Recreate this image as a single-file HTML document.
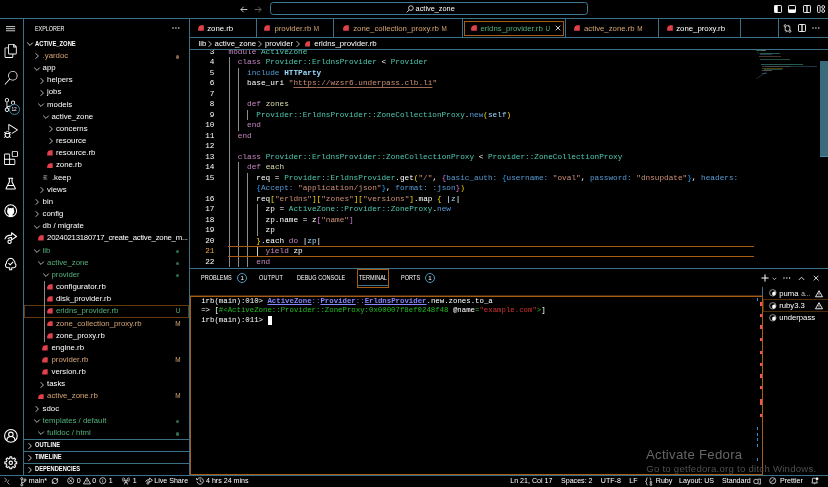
<!DOCTYPE html>
<html lang="en"><head><meta charset="utf-8"><title>erldns_provider.rb - active_zone</title>
<style>
*{box-sizing:border-box;margin:0;padding:0}
html,body{width:828px;height:487px;background:#000;overflow:hidden}
body{position:relative;font-family:"Liberation Sans",sans-serif;color:#fff;font-size:7.3px;line-height:1}
#app{position:absolute;left:0;top:0;width:828px;height:487px;will-change:transform}
.a{position:absolute}
.hl{position:absolute;height:1px;background:#3a7186}
.vl{position:absolute;width:1px;background:#3a7186}
.row{position:absolute;left:24px;width:165px;height:12.16px;line-height:12.16px;font-size:7.8px;white-space:nowrap}
.row span.t{position:absolute;top:0}
.row .st{position:absolute;left:149px;top:0;font-size:6.4px;width:10px;text-align:center}
.dot{position:absolute;left:151.9px;top:5.0px;width:3.6px;height:3.6px;border-radius:50%}
.mono{font-family:"Liberation Mono",monospace}
.code{position:absolute;left:228.55px;font-family:"Liberation Mono",monospace;font-size:7.735px;line-height:10.5px;height:10.5px;white-space:pre}
.ln{position:absolute;left:190px;width:24.5px;text-align:right;font-family:"Liberation Mono",monospace;font-size:7.72px;line-height:10.5px;height:10.5px;color:#fff}
.ig{position:absolute;width:1px;background:#9a9a9a}
.tab{position:absolute;top:19px;height:18px;line-height:19.4px;font-size:7.8px;white-space:nowrap}
.term{position:absolute;left:201.2px;font-family:"Liberation Mono",monospace;font-size:7.37px;line-height:9.4px;height:9.4px;white-space:pre;color:#fff}
.sb{position:absolute;top:475px;height:12px;line-height:13.2px;font-size:7.1px;white-space:nowrap;color:#fff}
.pt{position:absolute;top:272px;height:12px;line-height:12px;font-size:6.5px;white-space:nowrap;color:#fff;transform:scaleX(0.85);transform-origin:0 0}
.sec{position:absolute;left:35px;font-size:6.7px;font-weight:bold;height:12px;line-height:12px;transform:scaleX(0.855);transform-origin:0 0;white-space:nowrap}
</style></head>
<body>
<div id="app">
<div class="hl" style="left:0;top:18px;width:828px"></div>
<div class="vl" style="left:23px;top:18px;height:457px"></div>
<div class="vl" style="left:189px;top:18px;height:457px"></div>
<div class="hl" style="left:189px;top:37px;width:639px"></div>
<div class="hl" style="left:189px;top:49px;width:639px"></div>
<div class="hl" style="left:189px;top:268px;width:639px"></div>
<div class="hl" style="left:0;top:475px;width:828px"></div>
<div class="hl" style="left:24px;top:439px;width:165px"></div>
<div class="hl" style="left:24px;top:451px;width:165px"></div>
<div class="hl" style="left:24px;top:463px;width:165px"></div>
<div class="a" style="left:34.8px;top:24.7px;font-size:6.7px;line-height:8px;color:#fff;transform:scaleX(0.81);transform-origin:0 0">EXPLORER</div>
<svg class="a" style="left:25.5px;top:41.0px" width="8" height="6" viewBox="0 0 8 6"><path d="M1.2 1.6 L4 4.4 L6.8 1.6" fill="none" stroke="#fff" stroke-width="0.8"/></svg>
<div class="a" style="left:34.8px;top:39.7px;font-size:6.7px;line-height:8px;font-weight:bold;color:#fff;transform:scaleX(0.87);transform-origin:0 0">ACTIVE_ZONE</div>
<div class="row" style="top:50.00px"><svg class="a" style="left:10.200000000000001px;top:2.2px" width="6" height="8" viewBox="0 0 6 8"><path d="M1.6 1.2 L4.4 4 L1.6 6.8" fill="none" stroke="#e6e6e6" stroke-width="0.8"/></svg><span class="t" style="left:18.6px;color:#d7a574">.yardoc</span><span class="dot" style="background:#d7a574;opacity:.62"></span></div>
<div class="row" style="top:62.16px"><svg class="a" style="left:9.000000000000002px;top:3.4px" width="8" height="6" viewBox="0 0 8 6"><path d="M1.2 1.6 L4 4.4 L6.8 1.6" fill="none" stroke="#e6e6e6" stroke-width="0.8"/></svg><span class="t" style="left:18.6px;color:#fff">app</span></div>
<div class="row" style="top:74.32px"><svg class="a" style="left:14.650000000000004px;top:2.2px" width="6" height="8" viewBox="0 0 6 8"><path d="M1.6 1.2 L4.4 4 L1.6 6.8" fill="none" stroke="#e6e6e6" stroke-width="0.8"/></svg><span class="t" style="left:23.050000000000004px;color:#fff">helpers</span></div>
<div class="row" style="top:86.48px"><svg class="a" style="left:14.650000000000004px;top:2.2px" width="6" height="8" viewBox="0 0 6 8"><path d="M1.6 1.2 L4.4 4 L1.6 6.8" fill="none" stroke="#e6e6e6" stroke-width="0.8"/></svg><span class="t" style="left:23.050000000000004px;color:#fff">jobs</span></div>
<div class="row" style="top:98.64px"><svg class="a" style="left:13.450000000000005px;top:3.4px" width="8" height="6" viewBox="0 0 8 6"><path d="M1.2 1.6 L4 4.4 L6.8 1.6" fill="none" stroke="#e6e6e6" stroke-width="0.8"/></svg><span class="t" style="left:23.050000000000004px;color:#fff">models</span></div>
<div class="row" style="top:110.80px"><svg class="a" style="left:17.9px;top:3.4px" width="8" height="6" viewBox="0 0 8 6"><path d="M1.2 1.6 L4 4.4 L6.8 1.6" fill="none" stroke="#e6e6e6" stroke-width="0.8"/></svg><span class="t" style="left:27.5px;color:#fff">active_zone</span></div>
<div class="row" style="top:122.96px"><svg class="a" style="left:23.550000000000004px;top:2.2px" width="6" height="8" viewBox="0 0 6 8"><path d="M1.6 1.2 L4.4 4 L1.6 6.8" fill="none" stroke="#e6e6e6" stroke-width="0.8"/></svg><span class="t" style="left:31.950000000000003px;color:#fff">concerns</span></div>
<div class="row" style="top:135.12px"><svg class="a" style="left:23.550000000000004px;top:2.2px" width="6" height="8" viewBox="0 0 6 8"><path d="M1.6 1.2 L4.4 4 L1.6 6.8" fill="none" stroke="#e6e6e6" stroke-width="0.8"/></svg><span class="t" style="left:31.950000000000003px;color:#fff">resource</span></div>
<div class="row" style="top:147.28px"><svg class="a" style="left:22.750000000000004px;top:3.1px" width="5.9" height="5.8" viewBox="0 0 10 10"><path d="M0.3 9.7 L0.3 5.5 Q0.6 1 5 0.4 L9.7 0.3 L9.7 9.7 Z" fill="#e0414b"/></svg><span class="t" style="left:31.950000000000003px;color:#fff">resource.rb</span></div>
<div class="row" style="top:159.44px"><svg class="a" style="left:22.750000000000004px;top:3.1px" width="5.9" height="5.8" viewBox="0 0 10 10"><path d="M0.3 9.7 L0.3 5.5 Q0.6 1 5 0.4 L9.7 0.3 L9.7 9.7 Z" fill="#e0414b"/></svg><span class="t" style="left:31.950000000000003px;color:#fff">zone.rb</span></div>
<div class="row" style="top:171.60px"><svg class="a" style="left:18.9px;top:3.6px" width="5" height="5" viewBox="0 0 5 5"><path d="M0.4 0.8H4.2M0.4 2.4H3.2M0.4 4H4.2" stroke="#b0b0b0" stroke-width="0.8" fill="none"/></svg><span class="t" style="left:27.9px;color:#fff">.keep</span></div>
<div class="row" style="top:183.76px"><svg class="a" style="left:14.650000000000004px;top:2.2px" width="6" height="8" viewBox="0 0 6 8"><path d="M1.6 1.2 L4.4 4 L1.6 6.8" fill="none" stroke="#e6e6e6" stroke-width="0.8"/></svg><span class="t" style="left:23.050000000000004px;color:#fff">views</span></div>
<div class="row" style="top:195.92px"><svg class="a" style="left:10.200000000000001px;top:2.2px" width="6" height="8" viewBox="0 0 6 8"><path d="M1.6 1.2 L4.4 4 L1.6 6.8" fill="none" stroke="#e6e6e6" stroke-width="0.8"/></svg><span class="t" style="left:18.6px;color:#fff">bin</span></div>
<div class="row" style="top:208.08px"><svg class="a" style="left:10.200000000000001px;top:2.2px" width="6" height="8" viewBox="0 0 6 8"><path d="M1.6 1.2 L4.4 4 L1.6 6.8" fill="none" stroke="#e6e6e6" stroke-width="0.8"/></svg><span class="t" style="left:18.6px;color:#fff">config</span></div>
<div class="row" style="top:220.24px"><svg class="a" style="left:9.000000000000002px;top:3.4px" width="8" height="6" viewBox="0 0 8 6"><path d="M1.2 1.6 L4 4.4 L6.8 1.6" fill="none" stroke="#e6e6e6" stroke-width="0.8"/></svg><span class="t" style="left:18.6px;color:#fff">db / migrate</span></div>
<div class="row" style="top:232.40px"><svg class="a" style="left:13.850000000000005px;top:3.1px" width="5.9" height="5.8" viewBox="0 0 10 10"><path d="M0.3 9.7 L0.3 5.5 Q0.6 1 5 0.4 L9.7 0.3 L9.7 9.7 Z" fill="#e0414b"/></svg><span class="t" style="left:23.050000000000004px;color:#fff;letter-spacing:-0.245px">20240213180717_create_active_zone_m...</span></div>
<div class="row" style="top:244.56px"><svg class="a" style="left:9.000000000000002px;top:3.4px" width="8" height="6" viewBox="0 0 8 6"><path d="M1.2 1.6 L4 4.4 L6.8 1.6" fill="none" stroke="#e6e6e6" stroke-width="0.8"/></svg><span class="t" style="left:18.6px;color:#53b07c">lib</span><span class="dot" style="background:#53b07c;opacity:.62"></span></div>
<div class="row" style="top:256.72px"><svg class="a" style="left:13.450000000000005px;top:3.4px" width="8" height="6" viewBox="0 0 8 6"><path d="M1.2 1.6 L4 4.4 L6.8 1.6" fill="none" stroke="#e6e6e6" stroke-width="0.8"/></svg><span class="t" style="left:23.050000000000004px;color:#53b07c">active_zone</span><span class="dot" style="background:#53b07c;opacity:.62"></span></div>
<div class="row" style="top:268.88px"><svg class="a" style="left:17.9px;top:3.4px" width="8" height="6" viewBox="0 0 8 6"><path d="M1.2 1.6 L4 4.4 L6.8 1.6" fill="none" stroke="#e6e6e6" stroke-width="0.8"/></svg><span class="t" style="left:27.5px;color:#53b07c">provider</span><span class="dot" style="background:#53b07c;opacity:.62"></span></div>
<div class="row" style="top:281.04px"><svg class="a" style="left:22.750000000000004px;top:3.1px" width="5.9" height="5.8" viewBox="0 0 10 10"><path d="M0.3 9.7 L0.3 5.5 Q0.6 1 5 0.4 L9.7 0.3 L9.7 9.7 Z" fill="#e0414b"/></svg><span class="t" style="left:31.950000000000003px;color:#fff">configurator.rb</span></div>
<div class="row" style="top:293.20px"><svg class="a" style="left:22.750000000000004px;top:3.1px" width="5.9" height="5.8" viewBox="0 0 10 10"><path d="M0.3 9.7 L0.3 5.5 Q0.6 1 5 0.4 L9.7 0.3 L9.7 9.7 Z" fill="#e0414b"/></svg><span class="t" style="left:31.950000000000003px;color:#fff">disk_provider.rb</span></div>
<div class="row" style="top:305.36px"><svg class="a" style="left:22.750000000000004px;top:3.1px" width="5.9" height="5.8" viewBox="0 0 10 10"><path d="M0.3 9.7 L0.3 5.5 Q0.6 1 5 0.4 L9.7 0.3 L9.7 9.7 Z" fill="#e0414b"/></svg><span class="t" style="left:31.950000000000003px;color:#53b07c">erldns_provider.rb</span><span class="st" style="color:#53b07c">U</span></div>
<div class="row" style="top:317.52px"><svg class="a" style="left:22.750000000000004px;top:3.1px" width="5.9" height="5.8" viewBox="0 0 10 10"><path d="M0.3 9.7 L0.3 5.5 Q0.6 1 5 0.4 L9.7 0.3 L9.7 9.7 Z" fill="#e0414b"/></svg><span class="t" style="left:31.950000000000003px;color:#d7a574">zone_collection_proxy.rb</span><span class="st" style="color:#d7a574">M</span></div>
<div class="row" style="top:329.68px"><svg class="a" style="left:22.750000000000004px;top:3.1px" width="5.9" height="5.8" viewBox="0 0 10 10"><path d="M0.3 9.7 L0.3 5.5 Q0.6 1 5 0.4 L9.7 0.3 L9.7 9.7 Z" fill="#e0414b"/></svg><span class="t" style="left:31.950000000000003px;color:#fff">zone_proxy.rb</span></div>
<div class="row" style="top:341.84px"><svg class="a" style="left:18.3px;top:3.1px" width="5.9" height="5.8" viewBox="0 0 10 10"><path d="M0.3 9.7 L0.3 5.5 Q0.6 1 5 0.4 L9.7 0.3 L9.7 9.7 Z" fill="#e0414b"/></svg><span class="t" style="left:27.5px;color:#fff">engine.rb</span></div>
<div class="row" style="top:354.00px"><svg class="a" style="left:18.3px;top:3.1px" width="5.9" height="5.8" viewBox="0 0 10 10"><path d="M0.3 9.7 L0.3 5.5 Q0.6 1 5 0.4 L9.7 0.3 L9.7 9.7 Z" fill="#e0414b"/></svg><span class="t" style="left:27.5px;color:#d7a574">provider.rb</span><span class="st" style="color:#d7a574">M</span></div>
<div class="row" style="top:366.16px"><svg class="a" style="left:18.3px;top:3.1px" width="5.9" height="5.8" viewBox="0 0 10 10"><path d="M0.3 9.7 L0.3 5.5 Q0.6 1 5 0.4 L9.7 0.3 L9.7 9.7 Z" fill="#e0414b"/></svg><span class="t" style="left:27.5px;color:#fff">version.rb</span></div>
<div class="row" style="top:378.32px"><svg class="a" style="left:14.650000000000004px;top:2.2px" width="6" height="8" viewBox="0 0 6 8"><path d="M1.6 1.2 L4.4 4 L1.6 6.8" fill="none" stroke="#e6e6e6" stroke-width="0.8"/></svg><span class="t" style="left:23.050000000000004px;color:#fff">tasks</span></div>
<div class="row" style="top:390.48px"><svg class="a" style="left:13.850000000000005px;top:3.1px" width="5.9" height="5.8" viewBox="0 0 10 10"><path d="M0.3 9.7 L0.3 5.5 Q0.6 1 5 0.4 L9.7 0.3 L9.7 9.7 Z" fill="#e0414b"/></svg><span class="t" style="left:23.050000000000004px;color:#d7a574">active_zone.rb</span><span class="st" style="color:#d7a574">M</span></div>
<div class="row" style="top:402.64px"><svg class="a" style="left:10.200000000000001px;top:2.2px" width="6" height="8" viewBox="0 0 6 8"><path d="M1.6 1.2 L4.4 4 L1.6 6.8" fill="none" stroke="#e6e6e6" stroke-width="0.8"/></svg><span class="t" style="left:18.6px;color:#fff">sdoc</span></div>
<div class="row" style="top:414.80px"><svg class="a" style="left:9.000000000000002px;top:3.4px" width="8" height="6" viewBox="0 0 8 6"><path d="M1.2 1.6 L4 4.4 L6.8 1.6" fill="none" stroke="#e6e6e6" stroke-width="0.8"/></svg><span class="t" style="left:18.6px;color:#53b07c">templates / default</span><span class="dot" style="background:#53b07c;opacity:.62"></span></div>
<div class="row" style="top:426.96px"><svg class="a" style="left:13.450000000000005px;top:3.4px" width="8" height="6" viewBox="0 0 8 6"><path d="M1.2 1.6 L4 4.4 L6.8 1.6" fill="none" stroke="#e6e6e6" stroke-width="0.8"/></svg><span class="t" style="left:23.050000000000004px;color:#53b07c">fulldoc / html</span><span class="dot" style="background:#53b07c;opacity:.62"></span></div>
<div class="a" style="left:24px;top:305px;width:165px;height:13px;border:1px solid #63380d"></div>
<div class="a" style="left:43.8px;top:281.04px;width:1px;height:60.80px;background:#8a8a8a"></div>
<svg class="a" style="left:26.5px;top:441.6px" width="6" height="8" viewBox="0 0 6 8"><path d="M1.6 1.2 L4.4 4 L1.6 6.8" fill="none" stroke="#fff" stroke-width="0.8"/></svg>
<div class="sec" style="top:439.1px">OUTLINE</div>
<svg class="a" style="left:26.5px;top:453.6px" width="6" height="8" viewBox="0 0 6 8"><path d="M1.6 1.2 L4.4 4 L1.6 6.8" fill="none" stroke="#fff" stroke-width="0.8"/></svg>
<div class="sec" style="top:451.1px">TIMELINE</div>
<svg class="a" style="left:26.5px;top:465.6px" width="6" height="8" viewBox="0 0 6 8"><path d="M1.6 1.2 L4.4 4 L1.6 6.8" fill="none" stroke="#fff" stroke-width="0.8"/></svg>
<div class="sec" style="top:463.1px">DEPENDENCIES</div>
<svg class="a" style="left:240.2px;top:5.6px;overflow:visible" width="8" height="7" viewBox="0 0 8 7" ><path d="M7.4 3.5H0.9M3.7 0.7L0.9 3.5L3.7 6.3" fill="none" stroke="#d8d8d8" stroke-width="0.9"/></svg>
<svg class="a" style="left:254.4px;top:5.6px;overflow:visible" width="8" height="7" viewBox="0 0 8 7" ><path d="M0.6 3.5H7.1M4.3 0.7L7.1 3.5L4.3 6.3" fill="none" stroke="#6a6a6a" stroke-width="0.9"/></svg>
<div class="a" style="left:270px;top:2px;width:318px;height:13px;border:1px solid #3f7a92;border-radius:3.3px"></div>
<svg class="a" style="left:405.8px;top:4.6px;overflow:visible" width="8" height="8" viewBox="0 0 8 8" ><circle cx="4.9" cy="3.1" r="2.35" fill="none" stroke="#f0f0f0" stroke-width="0.8"/><path d="M3.2 4.8L0.7 7.4" stroke="#f0f0f0" stroke-width="0.8" fill="none"/></svg>
<div class="a" style="left:415.6px;top:4.5px;font-size:7.35px;line-height:8.4px;color:#fff;white-space:nowrap">active_zone</div>
<svg class="a" style="left:773.9px;top:4.6px;overflow:visible" width="8" height="8" viewBox="0 0 8 8" ><rect x="0.5" y="0.5" width="7" height="7" rx="0.7" fill="none" stroke="#fff" stroke-width="0.9"/><rect x="0.5" y="0.5" width="3.2" height="7" fill="#fff"/></svg>
<svg class="a" style="left:788.4px;top:4.6px;overflow:visible" width="8" height="8" viewBox="0 0 8 8" ><rect x="0.5" y="0.5" width="7" height="7" rx="0.7" fill="none" stroke="#fff" stroke-width="0.9"/><rect x="0.5" y="4.4" width="7" height="3.1" fill="#fff"/></svg>
<svg class="a" style="left:802.8px;top:4.6px;overflow:visible" width="8" height="8" viewBox="0 0 8 8" ><rect x="0.5" y="0.5" width="7" height="7" rx="0.7" fill="none" stroke="#fff" stroke-width="0.9"/><path d="M4 0.5V7.5" stroke="#fff" stroke-width="1.25"/></svg>
<svg class="a" style="left:817.3px;top:4.6px;overflow:visible" width="8" height="8" viewBox="0 0 8 8" ><rect x="0.5" y="0.5" width="2.6" height="7" rx="0.8" fill="none" stroke="#fff" stroke-width="0.85"/><circle cx="6.2" cy="2" r="1.45" fill="none" stroke="#fff" stroke-width="0.85"/><circle cx="6.2" cy="6" r="1.45" fill="none" stroke="#fff" stroke-width="0.85"/></svg>
<svg class="a" style="left:6.2px;top:26.0px;overflow:visible" width="9.2" height="5.4" viewBox="0 0 9.2 5.4" ><path d="M0 0.6H9.2M0 2.7H9.2M0 4.8H9.2" stroke="#fff" stroke-width="0.8" fill="none"/></svg>
<svg class="a" style="left:3.65px;top:44.45px;overflow:visible" width="13.9" height="13.9" viewBox="0 0 24 24" ><path fill="#fff" fill-rule="evenodd" d="M17.5 0h-9L7 1.5V6H2.5L1 7.5v15.07L2.5 24h12.07L16 22.57V18h4.7l1.3-1.43V4.5L17.5 0zm0 2.12l2.38 2.38H17.5V2.12zm-3 20.38h-12v-15H7v9.07L8.5 18h6v4.5zm6-6h-12v-15H16V6h4.5v10.5z"/></svg>
<svg class="a" style="left:3.65px;top:70.95px;overflow:visible" width="13.9" height="13.9" viewBox="0 0 24 24" ><path fill="#fff" fill-rule="evenodd" d="M15.25 0a8.25 8.25 0 0 0-6.18 13.72L1 22.88l1.12 1 8.05-9.12A8.251 8.251 0 1 0 15.25.01V0zm0 15a6.75 6.75 0 1 1 0-13.5 6.75 6.75 0 0 1 0 13.5z"/></svg>
<svg class="a" style="left:3.25px;top:97.65px;overflow:visible" width="13.9" height="13.9" viewBox="0 0 24 24" ><path fill="#fff" fill-rule="evenodd" d="M21.007 8.222A3.738 3.738 0 0 0 15.045 5.2a3.737 3.737 0 0 0 1.156 6.583 2.988 2.988 0 0 1-2.668 1.67h-2.99a4.456 4.456 0 0 0-2.989 1.165V7.4a3.737 3.737 0 1 0-1.494 0v9.117a3.776 3.776 0 1 0 1.816.099 2.99 2.99 0 0 1 2.668-1.667h2.99a4.484 4.484 0 0 0 4.223-3.039 3.736 3.736 0 0 0 3.25-3.687zM4.565 3.738a2.242 2.242 0 1 1 4.484 0 2.242 2.242 0 0 1-4.484 0zm4.484 16.441a2.242 2.242 0 1 1-4.484 0 2.242 2.242 0 0 1 4.484 0zm8.221-9.715a2.242 2.242 0 1 1 0-4.485 2.242 2.242 0 0 1 0 4.485z"/></svg>
<div class="a" style="left:8.6px;top:103.8px;width:11px;height:11px;border-radius:50%;background:#000;border:1px solid #3f86a6"></div>
<div class="a" style="left:8.6px;top:103.8px;width:11px;height:11px;line-height:11.4px;text-align:center;font-size:4.8px;color:#fff;letter-spacing:-0.1px">12</div>
<svg class="a" style="left:3.65px;top:124.25px;overflow:visible" width="13.9" height="13.9" viewBox="0 0 24 24" ><path fill="#fff" fill-rule="evenodd" d="M10.94 13.5l-1.32 1.32a3.73 3.73 0 0 0-7.24 0L1.06 13.5 0 14.56l1.72 1.72-.22.22V18H0v1.5h1.5v.08c.077.489.214.966.41 1.42L0 22.94 1.06 24l1.65-1.65A4.308 4.308 0 0 0 6 24a4.31 4.31 0 0 0 3.29-1.65L10.94 24 12 22.94 10.09 21c.198-.464.336-.951.41-1.45v-.1H12V18h-1.5v-1.5l-.22-.22L12 14.56l-1.06-1.06zM6 13.5a2.25 2.25 0 0 1 2.25 2.25h-4.5A2.25 2.25 0 0 1 6 13.5zm3 6a3.33 3.33 0 0 1-3 3 3.33 3.33 0 0 1-3-3v-2.25h6v2.25zm14.76-9.9v1.26L13.5 17.37V15.6l8.5-5.37L9 2v9.46a5.07 5.07 0 0 0-1.5-.72V.63L8.64 0l15.12 9.6z"/></svg>
<svg class="a" style="left:3.65px;top:150.65px;overflow:visible" width="13.9" height="13.9" viewBox="0 0 24 24" ><path fill="#fff" fill-rule="evenodd" d="M13.5 1.5L15 0h7.5L24 1.5V9l-1.5 1.5H15L13.5 9V1.5zm1.5 0V9h7.5V1.5H15zM0 15V6l1.5-1.5H9L10.5 6v7.5H18l1.5 1.5v7.5L18 24H1.5L0 22.5V15zm9-1.5V6H1.5v7.5H9zM9 15H1.5v7.5H9V15zm1.5 7.5H18V15h-7.5v7.5z"/></svg>
<svg class="a" style="left:3.9px;top:177.1px;overflow:visible" width="13.4" height="13.4" viewBox="0 0 24 24" ><g fill="none" stroke="#fff" stroke-width="1.9" stroke-linejoin="round" stroke-linecap="round"><path d="M8.4 2.4H15.6M9.6 2.4V9L3.8 20.2Q3.4 21.6 4.9 21.6H19.1Q20.6 21.6 20.2 20.2L14.4 9V2.4M6.4 15.4H17.6"/></g></svg>
<svg class="a" style="left:3.9px;top:203.7px;overflow:visible" width="13.4" height="13.4" viewBox="0 0 24 24" ><g fill="none" stroke="#fff" stroke-width="1.9" stroke-linejoin="round" stroke-linecap="round"><circle cx="12" cy="12" r="10.6"/><path d="M8.2 21.6V18.4Q5 17.6 5.6 13Q5.2 10.6 6.6 9.2Q6.2 7.4 7 6.2Q8.6 6.4 9.8 7.4Q12 6.9 14.2 7.4Q15.4 6.4 17 6.2Q17.8 7.4 17.4 9.2Q18.8 10.6 18.4 13Q18.6 17.4 15.6 18.2V21.6Z" fill="#fff" stroke="none"/></g></svg>
<svg class="a" style="left:3.9px;top:230.5px;overflow:visible" width="13.4" height="13.4" viewBox="0 0 24 24" ><g fill="none" stroke="#fff" stroke-width="1.9" stroke-linejoin="round" stroke-linecap="round"><path d="M1.8 14.2Q4 7.2 13.6 7.4V3.2L22.4 9.8L13.6 16V11.8Q9.6 11.6 7.4 13.6"/><circle cx="10" cy="19.4" r="3"/></g></svg>
<svg class="a" style="left:3.9px;top:257.1px;overflow:visible" width="13.4" height="13.4" viewBox="0 0 24 24" ><g fill="none" stroke="#fff" stroke-width="1.9" stroke-linejoin="round" stroke-linecap="round"><path d="M10.2 23V19.2H7.4Q3.6 19.2 2.6 15.8Q2 13 4.4 11.2Q3.6 7.6 6.6 6Q7.6 2.4 12 2.2Q16.4 2.4 17.4 6Q20.4 7.6 19.6 11.2Q22 13 21.4 15.8Q20.4 19.2 16.6 19.2H13.8V23ZM8.4 11.6L11 14.2L16 9"/></g></svg>
<svg class="a" style="left:3.7px;top:428.6px;overflow:visible" width="13.8" height="13.8" viewBox="0 0 24 24" ><g fill="none" stroke="#fff" stroke-width="1.9" stroke-linejoin="round" stroke-linecap="round"><circle cx="12" cy="12" r="11" /><circle cx="12" cy="9.4" r="3.9"/><path d="M4.8 20Q5.4 14.6 9.2 13.6M14.8 13.6Q18.6 14.6 19.2 20"/></g></svg>
<svg class="a" style="left:3.8px;top:455.5px;overflow:visible" width="13.6" height="13.6" viewBox="0 0 24 24" ><g fill="none" stroke="#fff" stroke-width="1.9" stroke-linejoin="round" stroke-linecap="round"><path d="M10.34 1.53L13.66 1.53L13.87 4.22L16.18 5.18L18.23 3.42L20.58 5.77L18.82 7.82L19.78 10.13L22.47 10.34L22.47 13.66L19.78 13.87L18.82 16.18L20.58 18.23L18.23 20.58L16.18 18.82L13.87 19.78L13.66 22.47L10.34 22.47L10.13 19.78L7.82 18.82L5.77 20.58L3.42 18.23L5.18 16.18L4.22 13.87L1.53 13.66L1.53 10.34L4.22 10.13L5.18 7.82L3.42 5.77L5.77 3.42L7.82 5.18L10.13 4.22Z"/><circle cx="12" cy="12" r="3"/></g></svg>
<svg class="a" style="left:172.2px;top:27.4px;overflow:visible" width="7.8" height="2" viewBox="0 0 7.8 2" ><circle cx="1.0" cy="1" r="0.72" fill="#fff"/><circle cx="3.9" cy="1" r="0.72" fill="#fff"/><circle cx="6.8" cy="1" r="0.72" fill="#fff"/></svg>
<div class="vl" style="left:256px;top:19px;height:18px"></div>
<div class="vl" style="left:333px;top:19px;height:18px"></div>
<div class="vl" style="left:462px;top:19px;height:18px"></div>
<div class="vl" style="left:565px;top:19px;height:18px"></div>
<div class="vl" style="left:658px;top:19px;height:18px"></div>
<div class="vl" style="left:740px;top:19px;height:18px"></div>
<div class="vl" style="left:778px;top:19px;height:18px"></div>
<svg class="a" style="left:197.6px;top:25.0px" width="6.0" height="6.0" viewBox="0 0 10 10"><path d="M0.3 9.7 L0.3 5.5 Q0.6 1 5 0.4 L9.7 0.3 L9.7 9.7 Z" fill="#e0414b"/></svg><div class="tab" style="left:207.2px;color:#fff">zone.rb</div>
<svg class="a" style="left:264.2px;top:25.0px" width="6.0" height="6.0" viewBox="0 0 10 10"><path d="M0.3 9.7 L0.3 5.5 Q0.6 1 5 0.4 L9.7 0.3 L9.7 9.7 Z" fill="#e0414b"/></svg><div class="tab" style="left:274.40000000000003px;color:#d7a574">provider.rb<span style="font-size:6.3px;margin-left:2.6px;color:#d7a574">M</span></div>
<svg class="a" style="left:343.1px;top:25.0px" width="6.0" height="6.0" viewBox="0 0 10 10"><path d="M0.3 9.7 L0.3 5.5 Q0.6 1 5 0.4 L9.7 0.3 L9.7 9.7 Z" fill="#e0414b"/></svg><div class="tab" style="left:353.20000000000005px;color:#d7a574">zone_collection_proxy.rb<span style="font-size:6.3px;margin-left:2.6px;color:#d7a574">M</span></div>
<svg class="a" style="left:470.8px;top:25.0px" width="6.0" height="6.0" viewBox="0 0 10 10"><path d="M0.3 9.7 L0.3 5.5 Q0.6 1 5 0.4 L9.7 0.3 L9.7 9.7 Z" fill="#e0414b"/></svg><div class="tab" style="left:480.40000000000003px;color:#53b07c">erldns_provider.rb<span style="font-size:6.3px;margin-left:2.6px;color:#53b07c">U</span></div>
<svg class="a" style="left:574.4px;top:25.0px" width="6.0" height="6.0" viewBox="0 0 10 10"><path d="M0.3 9.7 L0.3 5.5 Q0.6 1 5 0.4 L9.7 0.3 L9.7 9.7 Z" fill="#e0414b"/></svg><div class="tab" style="left:584.0px;color:#d7a574">active_zone.rb<span style="font-size:6.3px;margin-left:2.6px;color:#d7a574">M</span></div>
<svg class="a" style="left:666.6px;top:25.0px" width="6.0" height="6.0" viewBox="0 0 10 10"><path d="M0.3 9.7 L0.3 5.5 Q0.6 1 5 0.4 L9.7 0.3 L9.7 9.7 Z" fill="#e0414b"/></svg><div class="tab" style="left:676.2px;color:#fff">zone_proxy.rb</div>
<div class="a" style="left:464px;top:21px;width:100px;height:15px;border:1px solid #a85c14"></div>
<svg class="a" style="left:555.0px;top:25.4px;overflow:visible" width="6" height="6" viewBox="0 0 6 6" ><path d="M0.7 0.7L5.3 5.3M5.3 0.7L0.7 5.3" stroke="#fff" stroke-width="0.8" fill="none"/></svg>
<svg class="a" style="left:782.8px;top:24.0px;overflow:visible" width="9" height="9" viewBox="0 0 9 9" ><g fill="none" stroke="#fff" stroke-width="0.75"><circle cx="2.2" cy="1.8" r="1.1"/><circle cx="6.8" cy="7.2" r="1.1"/><path d="M2.2 2.9V6.2Q2.2 7.2 3.2 7.2H4.2M6.8 6.1V2.8Q6.8 1.8 5.8 1.8H4.8M5.6 0.8L4.6 1.8L5.6 2.8M3.4 6.2L4.4 7.2L3.4 8.2"/></g></svg>
<svg class="a" style="left:797.6px;top:24.2px;overflow:visible" width="8" height="8" viewBox="0 0 8 8" ><rect x="0.5" y="0.5" width="7" height="7" rx="0.7" fill="none" stroke="#fff" stroke-width="0.9"/><path d="M4 0.5V7.5" stroke="#fff" stroke-width="1.25"/></svg>
<svg class="a" style="left:811.6px;top:27.3px;overflow:visible" width="7.8" height="2" viewBox="0 0 7.8 2" ><circle cx="1.0" cy="1" r="0.68" fill="#fff"/><circle cx="3.9" cy="1" r="0.68" fill="#fff"/><circle cx="6.8" cy="1" r="0.68" fill="#fff"/></svg>
<div class="a" style="left:198.6px;top:38.2px;height:11.6px;line-height:11.6px;font-size:7.8px;color:#fff;white-space:nowrap">lib</div>
<div class="a" style="left:214.6px;top:38.2px;height:11.6px;line-height:11.6px;font-size:7.8px;color:#fff;white-space:nowrap">active_zone</div>
<div class="a" style="left:264.9px;top:38.2px;height:11.6px;line-height:11.6px;font-size:7.8px;color:#fff;white-space:nowrap">provider</div>
<div class="a" style="left:314.2px;top:38.2px;height:11.6px;line-height:11.6px;font-size:7.8px;color:#fff;white-space:nowrap">erldns_provider.rb</div>
<svg class="a" style="left:207.4px;top:40.2px" width="6" height="8" viewBox="0 0 6 8"><path d="M1.6 1.2 L4.4 4 L1.6 6.8" fill="none" stroke="#e6e6e6" stroke-width="0.8"/></svg>
<svg class="a" style="left:257.4px;top:40.2px" width="6" height="8" viewBox="0 0 6 8"><path d="M1.6 1.2 L4.4 4 L1.6 6.8" fill="none" stroke="#e6e6e6" stroke-width="0.8"/></svg>
<svg class="a" style="left:295.0px;top:40.2px" width="6" height="8" viewBox="0 0 6 8"><path d="M1.6 1.2 L4.4 4 L1.6 6.8" fill="none" stroke="#e6e6e6" stroke-width="0.8"/></svg>
<svg class="a" style="left:304.6px;top:41.3px" width="5.8" height="5.8" viewBox="0 0 10 10"><path d="M0.3 9.7 L0.3 5.5 Q0.6 1 5 0.4 L9.7 0.3 L9.7 9.7 Z" fill="#e0414b"/></svg>
<div class="a" style="left:0;top:50px;width:828px;height:218px;overflow:hidden"><div class="ln" style="top:-3.50px;color:#fff">3</div><div class="code" style="top:-3.50px"><span style="color:#c586c0">module</span> <span style="color:#4ec9b0">ActiveZone</span></div><div class="ln" style="top:7.00px;color:#fff">4</div><div class="code" style="top:7.00px">  <span style="color:#c586c0">class</span> <span style="color:#4ec9b0">Provider::ErldnsProvider</span><span style="color:#ffffff"> &lt; </span><span style="color:#4ec9b0">Provider</span></div><div class="ln" style="top:17.50px;color:#fff">5</div><div class="code" style="top:17.50px">    <span style="color:#569cd6">include</span> <span style="color:#9cdcfe;font-weight:bold">HTTParty</span></div><div class="ln" style="top:28.00px;color:#fff">6</div><div class="code" style="top:28.00px">    <span style="color:#ffffff">base_uri </span><span style="color:#ce9178">&quot;</span><span style="color:#ce9178;text-decoration:underline;text-underline-offset:2.2px;text-decoration-thickness:0.6px;text-decoration-color:#9a6a55">https</span><span style="color:#ce9178;text-decoration:underline;text-underline-offset:2.2px;text-decoration-thickness:0.6px;text-decoration-color:#9a6a55">://wzsr6.underpass.clb.li</span><span style="color:#ce9178">&quot;</span></div><div class="ln" style="top:38.50px;color:#fff">7</div><div class="code" style="top:38.50px"></div><div class="ln" style="top:49.00px;color:#fff">8</div><div class="code" style="top:49.00px">    <span style="color:#c586c0">def</span> <span style="color:#dcdcaa">zones</span></div><div class="ln" style="top:59.50px;color:#fff">9</div><div class="code" style="top:59.50px">      <span style="color:#4ec9b0">Provider::ErldnsProvider::ZoneCollectionProxy</span><span style="color:#ffffff">.</span><span style="color:#569cd6">new</span><span style="color:#ffd700">(</span><span style="color:#9cdcfe">self</span><span style="color:#ffd700">)</span></div><div class="ln" style="top:70.00px;color:#fff">10</div><div class="code" style="top:70.00px">    <span style="color:#c586c0">end</span></div><div class="ln" style="top:80.50px;color:#fff">11</div><div class="code" style="top:80.50px">  <span style="color:#c586c0">end</span></div><div class="ln" style="top:91.00px;color:#fff">12</div><div class="code" style="top:91.00px"></div><div class="ln" style="top:101.50px;color:#fff">13</div><div class="code" style="top:101.50px">  <span style="color:#c586c0">class</span> <span style="color:#4ec9b0">Provider::ErldnsProvider::ZoneCollectionProxy</span><span style="color:#ffffff"> &lt; </span><span style="color:#4ec9b0">Provider::ZoneCollectionProxy</span></div><div class="ln" style="top:112.00px;color:#fff">14</div><div class="code" style="top:112.00px">    <span style="color:#c586c0">def</span> <span style="color:#dcdcaa">each</span></div><div class="ln" style="top:122.50px;color:#fff">15</div><div class="code" style="top:122.50px">      <span style="color:#ffffff">req = </span><span style="color:#4ec9b0">Provider::ErldnsProvider</span><span style="color:#ffffff">.get</span><span style="color:#ffd700">(</span><span style="color:#ce9178">&quot;/&quot;</span><span style="color:#ffffff">, </span><span style="color:#da70d6">{</span><span style="color:#569cd6">basic_auth: </span><span style="color:#179fff">{</span><span style="color:#569cd6">username: </span><span style="color:#ce9178">&quot;oval&quot;</span><span style="color:#ffffff">, </span><span style="color:#569cd6">password: </span><span style="color:#ce9178">&quot;dnsupdate&quot;</span><span style="color:#179fff">}</span><span style="color:#ffffff">, </span><span style="color:#569cd6">headers:</span></div><div class="code" style="top:133.00px">      <span style="color:#179fff">{</span><span style="color:#569cd6">Accept: </span><span style="color:#ce9178">&quot;application/json&quot;</span><span style="color:#179fff">}</span><span style="color:#ffffff">, </span><span style="color:#569cd6">format: </span><span style="color:#569cd6">:json</span><span style="color:#da70d6">}</span><span style="color:#ffd700">)</span></div><div class="ln" style="top:143.50px;color:#fff">16</div><div class="code" style="top:143.50px">      <span style="color:#ffffff">req</span><span style="color:#ffd700">[</span><span style="color:#ce9178">&quot;erldns&quot;</span><span style="color:#ffd700">]</span><span style="color:#ffd700">[</span><span style="color:#ce9178">&quot;zones&quot;</span><span style="color:#ffd700">]</span><span style="color:#ffd700">[</span><span style="color:#ce9178">&quot;versions&quot;</span><span style="color:#ffd700">]</span><span style="color:#ffffff">.map </span><span style="color:#ffd700">{</span><span style="color:#ffffff"> |</span><span style="color:#9cdcfe">z</span><span style="color:#ffffff">|</span></div><div class="ln" style="top:154.00px;color:#fff">17</div><div class="code" style="top:154.00px">        <span style="color:#ffffff">zp = </span><span style="color:#4ec9b0">ActiveZone::Provider::ZoneProxy</span><span style="color:#ffffff">.</span><span style="color:#569cd6">new</span></div><div class="ln" style="top:164.50px;color:#fff">18</div><div class="code" style="top:164.50px">        <span style="color:#ffffff">zp.name = z</span><span style="color:#da70d6">[</span><span style="color:#ce9178">&quot;name&quot;</span><span style="color:#da70d6">]</span></div><div class="ln" style="top:175.00px;color:#fff">19</div><div class="code" style="top:175.00px">        <span style="color:#ffffff">zp</span></div><div class="ln" style="top:185.50px;color:#fff">20</div><div class="code" style="top:185.50px">      <span style="color:#ffd700">}</span><span style="color:#ffffff">.each </span><span style="color:#c586c0">do</span><span style="color:#ffffff"> |</span><span style="color:#9cdcfe">zp</span><span style="color:#ffffff">|</span></div><div class="ln" style="top:196.00px;color:#e8a33d">21</div><div class="code" style="top:196.00px">        <span style="color:#c586c0">yield</span><span style="color:#ffffff"> zp</span></div><div class="ln" style="top:206.50px;color:#fff">22</div><div class="code" style="top:206.50px">      <span style="color:#c586c0">end</span></div><div class="ig" style="left:228.75px;top:7.00px;height:210.00px;background:#8c8c8c"></div><div class="ig" style="left:238.01px;top:17.50px;height:63.00px;background:#8c8c8c"></div><div class="ig" style="left:238.01px;top:112.00px;height:105.00px;background:#8c8c8c"></div><div class="ig" style="left:247.28px;top:59.50px;height:10.50px;background:#8c8c8c"></div><div class="ig" style="left:247.28px;top:122.50px;height:94.50px;background:#8c8c8c"></div><div class="ig" style="left:256.54px;top:154.00px;height:31.50px;background:#8c8c8c"></div><div class="ig" style="left:256.54px;top:196.00px;height:10.50px;background:#d0d0d0"></div><div class="a" style="left:228.4px;top:195.80px;width:526px;height:10.90px;border-top:1px solid #a85c14;border-bottom:1px solid #a85c14"></div></div>
<div class="a" style="left:820.4px;top:61px;width:7.6px;height:96px;background:#3b6a7d"></div>
<div class="a" style="left:820.4px;top:156px;width:7.6px;height:1px;background:#4a8ba6"></div>
<div class="a" style="left:756.4px;top:50.4px;width:9.6px;height:1px;background:#4ec9b0;opacity:0.5"></div><div class="a" style="left:761px;top:50.4px;width:4.0px;height:1px;background:#888;opacity:0.4"></div><div class="a" style="left:760px;top:53.1px;width:20.0px;height:1px;background:#4ec9b0;opacity:0.45"></div><div class="a" style="left:760px;top:54.3px;width:12.0px;height:1px;background:#569cd6;opacity:0.35"></div><div class="a" style="left:759px;top:55.9px;width:22.0px;height:1px;background:#ce9178;opacity:0.35"></div><div class="a" style="left:760px;top:59.1px;width:30.0px;height:1px;background:#4ec9b0;opacity:0.4"></div><div class="a" style="left:761px;top:63.7px;width:42.0px;height:1px;background:#4ec9b0;opacity:0.45"></div><div class="a" style="left:762px;top:66.2px;width:55.0px;height:1px;background:#569cd6;opacity:0.32"></div><div class="a" style="left:765px;top:66.2px;width:25.0px;height:1px;background:#ce9178;opacity:0.25"></div><div class="a" style="left:762px;top:68.2px;width:21.0px;height:1px;background:#ffd700;opacity:0.3"></div><div class="a" style="left:764px;top:69.2px;width:18.0px;height:1px;background:#4ec9b0;opacity:0.35"></div><div class="a" style="left:762px;top:70.1px;width:10.0px;height:1px;background:#ffffff;opacity:0.3"></div><div class="a" style="left:762px;top:72.6px;width:5.0px;height:1px;background:#569cd6;opacity:0.4"></div>
<svg class="a" style="left:756px;top:51px;overflow:visible" width="12" height="30" viewBox="0 0 12 30" ><path d="M1 1.2L3.8 3.4M10.4 21L0.6 27.6" stroke="#999" stroke-width="0.5" opacity="0.55" fill="none"/></svg>
<div class="pt" style="left:200.6px">PROBLEMS</div>
<div class="pt" style="left:259.2px;letter-spacing:0.25px">OUTPUT</div>
<div class="pt" style="left:296.9px">DEBUG CONSOLE</div>
<div class="pt" style="left:359.4px">TERMINAL</div>
<div class="pt" style="left:400.6px;letter-spacing:0.08px">PORTS</div>
<div class="a" style="left:237.10000000000002px;top:273.1px;width:10.4px;height:10.4px;border-radius:50%;border:1px solid #4796bb;font-size:6.1px;line-height:8.6px;text-align:center;color:#fff">1</div>
<div class="a" style="left:424.7px;top:273.1px;width:10.4px;height:10.4px;border-radius:50%;border:1px solid #4796bb;font-size:6.1px;line-height:8.6px;text-align:center;color:#fff">1</div>
<div class="a" style="left:357px;top:269px;width:32px;height:18.6px;border:1px solid #a85c14"></div>
<div class="a" style="left:358px;top:285.2px;width:30px;height:1px;background:#3a7186"></div>
<svg class="a" style="left:761.2px;top:274.2px;overflow:visible" width="8" height="8" viewBox="0 0 8 8" ><path d="M4 0.4V7.6M0.4 4H7.6" stroke="#fff" stroke-width="1" fill="none"/></svg>
<svg class="a" style="left:771.8px;top:276.6px;overflow:visible" width="5" height="4" viewBox="0 0 5 4" ><path d="M0.7 0.8L2.5 2.6L4.3 0.8" stroke="#fff" stroke-width="0.7" fill="none"/></svg>
<svg class="a" style="left:783.0px;top:277.2px;overflow:visible" width="7.6" height="2" viewBox="0 0 7.6 2" ><circle cx="1.0" cy="1" r="0.68" fill="#fff"/><circle cx="3.8" cy="1" r="0.68" fill="#fff"/><circle cx="6.6" cy="1" r="0.68" fill="#fff"/></svg>
<svg class="a" style="left:797.9px;top:275.6px;overflow:visible" width="7" height="5" viewBox="0 0 7 5" ><path d="M0.8 4L3.5 1.2L6.2 4" stroke="#fff" stroke-width="0.8" fill="none"/></svg>
<svg class="a" style="left:812.6px;top:275.0px;overflow:visible" width="6.2" height="6.2" viewBox="0 0 6 6" ><path d="M0.7 0.7L5.3 5.3M5.3 0.7L0.7 5.3" stroke="#fff" stroke-width="0.8" fill="none"/></svg>
<div class="a" style="left:190px;top:296px;width:572.6px;height:179px;border:1px solid #a85c14"></div>
<div class="a" style="left:190px;top:295px;width:572.6px;height:1px;background:#4a290a"></div>
<div class="term" style="top:297.00px">irb(main):010&gt; <span style="color:#8585ff;font-weight:bold;text-decoration:underline;text-underline-offset:0.8px;text-decoration-thickness:0.5px">ActiveZone</span><span style="color:#7b7bff">::</span><span style="color:#8585ff;font-weight:bold;text-decoration:underline;text-underline-offset:0.8px;text-decoration-thickness:0.5px">Provider</span><span style="color:#7b7bff">::</span><span style="color:#8585ff;font-weight:bold;text-decoration:underline;text-underline-offset:0.8px;text-decoration-thickness:0.5px">ErldnsProvider</span>.new.zones.to_a</div>
<div class="term" style="top:306.45px">=&gt; [<span style="color:#1fc01f">#&lt;ActiveZone::Provider::ZoneProxy:0x00007f8ef0248f48</span> @name<span style="color:#1fc01f">=</span><span style="color:#d03030">&quot;example.com&quot;</span><span style="color:#1fc01f">&gt;</span>]</div>
<div class="term" style="top:315.90px">irb(main):011&gt; </div>
<div class="a" style="left:267.6px;top:316.2px;width:4.3px;height:9px;background:#fff"></div>
<div class="a" style="left:756.8px;top:297.8px;width:1.5px;height:2.9px;background:#2f8fd6"></div>
<div class="a" style="left:760.1px;top:302.1px;width:1.5px;height:3.5px;background:#f4574d"></div>
<div class="a" style="left:760.1px;top:313.8px;width:1.5px;height:3.1px;background:#f4574d"></div>
<div class="a" style="left:760.1px;top:325.1px;width:1.5px;height:3.5px;background:#f4574d"></div>
<div class="a" style="left:760.1px;top:337.8px;width:1.5px;height:2.9px;background:#f4574d"></div>
<div class="a" style="left:760.1px;top:350.5px;width:1.5px;height:3.5px;background:#f4574d"></div>
<div class="a" style="left:760.1px;top:362.6px;width:1.5px;height:3.1px;background:#f4574d"></div>
<div class="a" style="left:760.1px;top:374.3px;width:1.5px;height:3.5px;background:#f4574d"></div>
<div class="a" style="left:760.1px;top:386px;width:1.5px;height:3px;background:#f4574d"></div>
<div class="a" style="left:760.1px;top:399px;width:1.5px;height:5.5px;background:#f4574d"></div>
<div class="a" style="left:760.1px;top:414.3px;width:1.5px;height:2.4px;background:#f4574d"></div>
<div class="a" style="left:756.8px;top:427px;width:1.5px;height:3px;background:#2f8fd6"></div>
<div class="a" style="left:756.8px;top:432.8px;width:1.5px;height:2.9px;background:#2f8fd6"></div>
<div class="a" style="left:756.8px;top:438px;width:1.5px;height:3.2px;background:#2f8fd6"></div>
<div class="a" style="left:756.8px;top:443.5px;width:1.5px;height:3px;background:#2f8fd6"></div>
<div class="a" style="left:756.8px;top:458.2px;width:1.5px;height:3.3px;background:#2f8fd6"></div>
<svg class="a" style="left:768.6px;top:289.4px;overflow:visible" width="7.6" height="7.6" viewBox="0 0 8 8" ><circle cx="4" cy="4" r="3.4" fill="none" stroke="#d0d0d0" stroke-width="0.7"/><path d="M3.4 3.6L5.6 2.4L7 3.4V5.4L5 7.2L3.4 6.2Z" fill="#fff"/></svg>
<div class="a" style="left:779.2px;top:287.0px;height:12.2px;line-height:13.4px;font-size:7.7px;color:#fff;white-space:nowrap">puma</div>
<div class="a" style="left:801.2px;top:287.0px;height:12.2px;line-height:13.8px;font-size:6.6px;color:#c8c8c8;white-space:nowrap">a...</div>
<svg class="a" style="left:814.5px;top:289.5px;overflow:visible" width="8" height="7.4" viewBox="0 0 8 7.4" ><path d="M4 0.7L7.5 6.8H0.5Z" fill="none" stroke="#fff" stroke-width="0.9" stroke-linejoin="round"/><path d="M4 2.8V4.8M4 5.5V6.1" stroke="#fff" stroke-width="0.8"/></svg>
<svg class="a" style="left:768.6px;top:301.56px;overflow:visible" width="7.6" height="7.6" viewBox="0 0 8 8" ><circle cx="4" cy="4" r="3.4" fill="none" stroke="#d0d0d0" stroke-width="0.7"/><path d="M3.4 3.6L5.6 2.4L7 3.4V5.4L5 7.2L3.4 6.2Z" fill="#fff"/></svg>
<div class="a" style="left:779.2px;top:299.16px;height:12.2px;line-height:13.4px;font-size:7.7px;color:#fff;white-space:nowrap">ruby3.3</div>
<svg class="a" style="left:814.5px;top:301.66px;overflow:visible" width="8" height="7.4" viewBox="0 0 8 7.4" ><path d="M4 0.7L7.5 6.8H0.5Z" fill="none" stroke="#fff" stroke-width="0.9" stroke-linejoin="round"/><path d="M4 2.8V4.8M4 5.5V6.1" stroke="#fff" stroke-width="0.8"/></svg>
<svg class="a" style="left:768.6px;top:313.71999999999997px;overflow:visible" width="7.6" height="7.6" viewBox="0 0 8 8" ><circle cx="4" cy="4" r="3.4" fill="none" stroke="#d0d0d0" stroke-width="0.7"/><path d="M3.4 3.6L5.6 2.4L7 3.4V5.4L5 7.2L3.4 6.2Z" fill="#fff"/></svg>
<div class="a" style="left:779.2px;top:311.32px;height:12.2px;line-height:13.4px;font-size:7.7px;color:#fff;white-space:nowrap">underpass</div>
<div class="a" style="left:762px;top:287.4px;width:1px;height:9px;background:#3a7186"></div>
<div class="a" style="left:763px;top:299.2px;width:65px;height:12.4px;border:1px solid #4f2d0a;border-right:none"></div>
<div class="a" style="left:646.0px;top:446.6px;font-size:13.2px;line-height:15px;color:#666;white-space:nowrap;letter-spacing:0.27px">Activate Fedora</div>
<div class="a" style="left:646.2px;top:463.2px;font-size:9.6px;line-height:11px;color:#505050;white-space:nowrap;letter-spacing:0.25px">Go to getfedora.org to ditch Windows.</div>
<svg class="a" style="left:4.2px;top:477.0px;overflow:visible" width="6" height="8" viewBox="0 0 6 8" ><path d="M0.5 0.8L2.7 3L0.5 5.2M5.4 3L3.2 5.2L5.4 7.4" stroke="#ddd" stroke-width="0.7" fill="none"/></svg>
<svg class="a" style="left:20.2px;top:476.6px;overflow:visible" width="6.6" height="9.6" viewBox="0 0 6 9" ><g fill="none" stroke="#fff" stroke-width="0.7"><circle cx="1.6" cy="1.6" r="1"/><circle cx="1.6" cy="7.4" r="1"/><circle cx="4.6" cy="2.8" r="1"/><path d="M1.6 2.6V6.4M4.6 3.8Q4.6 5 1.6 5.4"/></g></svg>
<div class="sb" style="left:28.8px;">main*</div>
<svg class="a" style="left:51.2px;top:477.2px;overflow:visible" width="8" height="8" viewBox="0 0 8 8" ><g fill="none" stroke="#fff" stroke-width="0.75"><path d="M1.2 4.6A2.8 2.8 0 0 1 6.4 2.8M6.8 3.4A2.8 2.8 0 0 1 1.6 5.2"/><path d="M6.6 1.2V3H4.8M1.4 6.8V5H3.2"/></g></svg>
<svg class="a" style="left:67.2px;top:477.4px;overflow:visible" width="7.4" height="7.4" viewBox="0 0 8 8" ><g fill="none" stroke="#fff" stroke-width="0.75"><circle cx="4" cy="4" r="3.3"/><path d="M2.6 2.6L5.4 5.4M5.4 2.6L2.6 5.4"/></g></svg>
<div class="sb" style="left:76.8px;">0</div>
<svg class="a" style="left:82.6px;top:477.2px;overflow:visible" width="8" height="7.6" viewBox="0 0 8 7.4" ><path d="M4 0.7L7.5 6.8H0.5Z" fill="none" stroke="#fff" stroke-width="0.75" stroke-linejoin="round"/><path d="M4 2.8V4.8M4 5.5V6.1" stroke="#fff" stroke-width="0.7"/></svg>
<div class="sb" style="left:92.2px;">0</div>
<svg class="a" style="left:98.6px;top:477.4px;overflow:visible" width="7.4" height="7.4" viewBox="0 0 8 8" ><g fill="none" stroke="#fff" stroke-width="0.75"><circle cx="4" cy="4" r="3.3"/><path d="M4 3.6V5.8M4 2.2V2.9"/></g></svg>
<div class="sb" style="left:108.8px;">1</div>
<svg class="a" style="left:122.4px;top:477.2px;overflow:visible" width="8" height="8" viewBox="0 0 8 8" ><g fill="none" stroke="#fff" stroke-width="0.7"><path d="M4 2.6L2.4 7.4M4 2.6L5.6 7.4M3 5.6H5"/><path d="M2.6 1.2Q1.8 2.6 2.6 4M1.3 0.5Q0 2.6 1.3 4.7M5.4 1.2Q6.2 2.6 5.4 4M6.7 0.5Q8 2.6 6.7 4.7"/></g></svg>
<div class="sb" style="left:132.8px;">1</div>
<svg class="a" style="left:144.8px;top:477.2px;overflow:visible" width="8" height="8" viewBox="0 0 24 24" ><g fill="none" stroke="#fff" stroke-width="2.2"><path d="M1.8 14.2Q4 7.2 13.6 7.4V3.2L22.4 9.8L13.6 16V11.8Q9.6 11.6 7.4 13.6"/><circle cx="8.6" cy="18.8" r="3"/></g></svg>
<div class="sb" style="left:154.2px;">Live Share</div>
<svg class="a" style="left:196.4px;top:477.2px;overflow:visible" width="8" height="8" viewBox="0 0 8 8" ><g fill="none" stroke="#fff" stroke-width="0.75"><path d="M1.5 2.2A3.2 3.2 0 1 1 1 4.6"/><path d="M0.6 1V2.6H2.2M4.2 2.2V4.2L5.6 5"/></g></svg>
<div class="sb" style="left:206.0px;">4 hrs 24 mins</div>
<div class="sb" style="left:510.2px;">Ln 21, Col 17</div>
<div class="sb" style="left:561.0px;">Spaces: 2</div>
<div class="sb" style="left:600.8px;">UTF-8</div>
<div class="sb" style="left:629.2px;">LF</div>
<svg class="a" style="left:644.8px;top:476.6px;overflow:visible" width="8.4" height="9" viewBox="0 0 8.4 9" ><g fill="none" stroke="#fff" stroke-width="0.7"><path d="M2.6 0.8Q1.5 0.8 1.5 1.9V3.2Q1.5 4.3 0.5 4.4Q1.5 4.5 1.5 5.6V6.9Q1.5 8 2.6 8"/><path d="M4.6 0.8Q5.7 0.8 5.7 1.9V3.4"/><circle cx="5.9" cy="5.2" r="0.9"/><circle cx="5.9" cy="7.6" r="0.9"/><path d="M5.9 6.1V6.7"/></g></svg>
<div class="sb" style="left:655.8px;">Ruby</div>
<div class="sb" style="left:679.0px;">Layout: US</div>
<div class="sb" style="left:722.0px;">Standard</div>
<svg class="a" style="left:753.4px;top:477.6px;overflow:visible" width="8" height="7" viewBox="0 0 8 7" ><g fill="none" stroke="#fff" stroke-width="0.7"><circle cx="3" cy="3.5" r="2.3"/><path d="M4.6 1.4L7.4 0.8V6.2L4.6 5.6"/></g></svg>
<svg class="a" style="left:769.4px;top:477.4px;overflow:visible" width="7.4" height="7.4" viewBox="0 0 8 8" ><g fill="none" stroke="#fff" stroke-width="0.75"><circle cx="4" cy="4" r="3.3"/><path d="M1.8 6.2L6.2 1.8"/></g></svg>
<div class="sb" style="left:780.0px;">Prettier</div>
<svg class="a" style="left:810.8px;top:477.2px;overflow:visible" width="8" height="8" viewBox="0 0 8 8" ><g fill="none" stroke="#fff" stroke-width="0.75"><path d="M4.6 1.2H2.2Q1.4 1.2 1.4 2V5L0.8 6H6.4L5.8 5V3.6M2.8 6.2Q3.6 7.4 4.4 6.2"/><circle cx="6" cy="1.8" r="1.1" fill="#fff"/></g></svg>
</div>
</body></html>
